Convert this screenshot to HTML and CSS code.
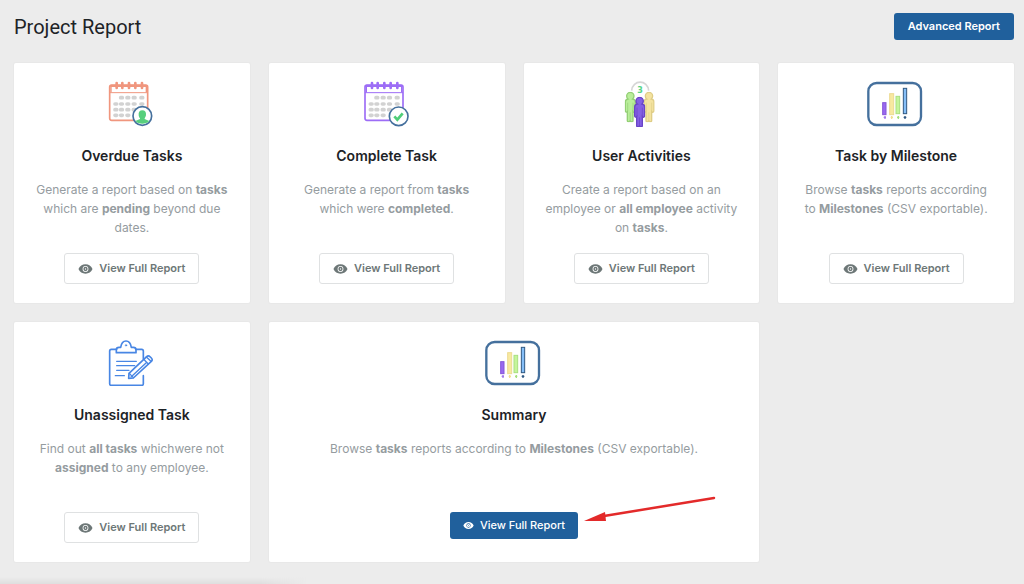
FILE: index.html
```html
<!DOCTYPE html>
<html lang="en">
<head>
<meta charset="utf-8">
<meta name="viewport" content="width=device-width, initial-scale=1">
<title>Project Report</title>
<link rel="stylesheet" href="styles.css">
</head>
<body>
<svg class="sprite" aria-hidden="true">
  <symbol id="eye" viewBox="0 0 16 12">
    <path fill="currentColor" fill-rule="evenodd" d="M8 1C4.600 1 1.800 3 .5 6c1.300 3 4.100 5 7.500 5s6.200-2 7.500-5C14.200 3 11.400 1 8 1Zm0 1.900a3.100 3.100 0 1 1 0 6.200 3.100 3.100 0 0 1 0-6.200Z"/>
    <path fill="currentColor" fill-rule="evenodd" d="M8 3.700a2.300 2.300 0 1 0 0 4.600 2.300 2.300 0 0 0 0-4.600Zm0 1.600a.7.7 0 1 1 0 1.400.7.7 0 0 1 0-1.400Z"/>
  </symbol>
  <symbol id="calendar" viewBox="0 27 192 138">
    <rect x="29" y="39" width="114" height="106" rx="6" fill="#fff" stroke="currentColor" stroke-width="5"/>
    <path d="M29 62H143M32 40H140" stroke="currentColor" stroke-width="3"/>
    <path d="M31 42H141" stroke="currentColor" stroke-width="6"/>
    <path d="M33 42V61M139 42V61" stroke="currentColor" stroke-width="4"/>
    <path d="M50 33V48M67 33V48M87 33V48M106 33V48M126 33V48" stroke="currentColor" stroke-width="8" stroke-linecap="round"/>
    <path d="M62 77h5M81 77h5M100 77h5M123 77h5M45 96h5M62 96h5M81 96h5M100 96h5M123 96h5M45 113h5M62 113h5M81 113h5M100 113h5M45 130h5M62 130h5M81 130h5" stroke="#d2d2d2" stroke-width="11" stroke-linecap="round"/>
  </symbol>
  <symbol id="person" viewBox="0 0 34 92">
    <path d="M17 2c6 0 11 5 11 11 0 4-2 7-4 9 5 1 8 4 8 9v26c0 5-5 6-7 3v28c0 3-7 3-8 0h-1c-1 3-8 3-8 0V60c-3 3-6 1-6-3V31c0-5 3-8 8-9-3-2-4-5-4-9 0-6 5-11 11-11Z" stroke-width="4"/>
    <path d="M9 33v26M25 33v26M16.500 62v25" fill="none" stroke-width="2"/>
  </symbol>
  <symbol id="chart" viewBox="3 27 210 138">
    <rect x="25" y="33" width="158" height="126" rx="25" fill="#fff" stroke="#45709d" stroke-width="7"/>
    <g stroke-width="3">
      <rect x="68" y="92" width="10" height="36" fill="#9868f0" stroke="#8556d8"/>
      <rect x="89" y="65" width="12" height="63" fill="#f8e9a0" stroke="#ecdb92"/>
      <rect x="108" y="73" width="11" height="52" fill="#c4f59b" stroke="#a9df80"/>
      <rect x="130" y="49" width="10" height="76" fill="#85bef7" stroke="#315982"/>
    </g>
    <g stroke-width="4">
      <path d="M71 136h7M75 132v9" stroke="#a27bea"/>
      <path d="M92 136h7M95 132v9" stroke="#f2df91"/>
      <path d="M111 136h7M115 132v9" stroke="#a5df7e"/>
      <path d="M131 136h8M135 132v9" stroke="#315982"/>
    </g>
  </symbol>
</svg>

<header class="page-header">
  <h1 class="page-title">Project Report</h1>
  <button class="button button-primary button-advanced" type="button">Advanced Report</button>
</header>

<main class="report-grid">
  <article class="card">
    <svg class="card-icon" aria-hidden="true" viewBox="0 27 192 138">
      <use class="coral" href="#calendar" x="0" y="27" width="192" height="138"/>
      <circle cx="127" cy="132" r="28" fill="#fff" stroke="#45709d" stroke-width="5"/>
      <path d="M127 115c8 0 12 6 11 13 0 5-3 8-4 11v2l14 6c-10 11-32 11-42 0l14-6v-2c-2-3-4-6-4-11-1-7 3-13 11-13Z" fill="#57cf7d"/>
    </svg>
    <h2 class="card-title">Overdue Tasks</h2>
    <p class="card-text">Generate a report based on <b>tasks</b> which are <b>pending</b> beyond due dates.</p>
    <div class="card-action"><a class="button button-outline" href="#overdue"><svg class="eye" aria-hidden="true"><use href="#eye"/></svg>View Full Report</a></div>
  </article>

  <article class="card">
    <svg class="card-icon" aria-hidden="true" viewBox="0 27 192 138">
      <use class="violet" href="#calendar" x="1" y="27" width="192" height="138"/>
      <circle cx="131" cy="133" r="28" fill="#fff" stroke="#45709d" stroke-width="5"/>
      <path d="m118 133 9 10 16-19" fill="none" stroke="#50ce79" stroke-width="8"/>
    </svg>
    <h2 class="card-title">Complete Task</h2>
    <p class="card-text">Generate a report from <b>tasks</b> which were <b>completed</b>.</p>
    <div class="card-action"><a class="button button-outline" href="#complete"><svg class="eye" aria-hidden="true"><use href="#eye"/></svg>View Full Report</a></div>
  </article>

  <article class="card">
    <svg class="card-icon" aria-hidden="true" viewBox="-4 27 192 138">
      <path d="M64 56c2-34 49-34 51 0" fill="none" stroke="#d6d6d6" stroke-width="5"/>
      <text class="icon-count" x="89" y="62">3</text>
      <use class="person-green" href="#person" x="43" y="59" width="34" height="92"/>
      <use class="person-yellow" href="#person" x="99" y="59" width="34" height="92"/>
      <use class="person-purple" href="#person" x="71" y="74" width="34" height="92"/>
    </svg>
    <h2 class="card-title">User Activities</h2>
    <p class="card-text">Create a report based on an employee or <b>all employee</b> activity on <b>tasks</b>.</p>
    <div class="card-action"><a class="button button-outline" href="#activities"><svg class="eye" aria-hidden="true"><use href="#eye"/></svg>View Full Report</a></div>
  </article>

  <article class="card">
    <svg class="card-icon card-icon-chart" aria-hidden="true"><use href="#chart"/></svg>
    <h2 class="card-title">Task by Milestone</h2>
    <p class="card-text">Browse <b>tasks</b> reports according to <b>Milestones</b> (CSV exportable).</p>
    <div class="card-action"><a class="button button-outline" href="#milestone"><svg class="eye" aria-hidden="true"><use href="#eye"/></svg>View Full Report</a></div>
  </article>

  <article class="card">
    <svg class="card-icon" aria-hidden="true" viewBox="0 24 192 138" fill="none" stroke="#4886e4" stroke-width="5" stroke-linecap="round" stroke-linejoin="round">
      <path d="M50 52H34q-5 0-5 5v98q0 5 5 5h91q5 0 5-5v-24M107 52h18q5 0 5 5v23"/>
      <path d="M49 62v-9q0-7 8-7h5q3-19 16-19t16 19h6q8 0 8 7v9Z"/>
      <circle cx="78" cy="40" r="2" stroke-width="3"/>
      <path d="M50 88h59M50 101h54M50 115h37M46 131h27" stroke-width="4"/>
      <g fill="#fff">
        <path d="m87 124 53-50q5-5 11 1l3 3q5 5 0 10l-54 50-14 1Z"/>
        <path d="m131 82 14 14M139 75l14 13M93 135l45-42M88 124l12 13" fill="none" stroke-width="4"/>
      </g>
    </svg>
    <h2 class="card-title">Unassigned Task</h2>
    <p class="card-text">Find out <b>all tasks</b> whichwere not <b>assigned</b> to any employee.</p>
    <div class="card-action"><a class="button button-outline" href="#unassigned"><svg class="eye" aria-hidden="true"><use href="#eye"/></svg>View Full Report</a></div>
  </article>

  <article class="card card-wide">
    <svg class="card-icon card-icon-chart" aria-hidden="true"><use href="#chart"/></svg>
    <h2 class="card-title">Summary</h2>
    <p class="card-text">Browse <b>tasks</b> reports according to <b>Milestones</b> (CSV exportable).</p>
    <div class="card-action">
      <a class="button button-primary button-summary" href="#summary"><svg class="eye eye-small" aria-hidden="true"><use href="#eye"/></svg>View Full Report
        <svg class="arrow" viewBox="0 0 132 28" aria-hidden="true"><path d="M20 20 130 2" stroke="#e32a2a" stroke-width="2.500" stroke-linecap="round"/><path d="m0 25 21-9 1 9Z" fill="#e32a2a"/></svg>
      </a>
    </div>
  </article>
</main>
<div class="bottom-shade"></div>
</body>
</html>
```
FILE: styles.css
```css
* { box-sizing: border-box; }

body {
  margin: 0;
  min-height: 100vh;
  padding: 13px 10px 23px 14px;
  background: #ececec;
  color: #1d2327;
  font-family: Inter, "Liberation Sans", sans-serif;
  position: relative;
}

.sprite { position: absolute; width: 0; height: 0; }

.page-header {
  display: flex;
  justify-content: space-between;
  align-items: flex-start;
  margin-bottom: 22px;
}

.page-title {
  margin: 0;
  font: 400 20px/28px Roboto, sans-serif;
}

.report-grid {
  display: grid;
  grid-template-columns: repeat(4, minmax(0, 1fr));
  grid-auto-rows: 1fr;
  gap: 19px;
}

.card {
  display: flex;
  flex-direction: column;
  align-items: center;
  padding: 18px 20px 19px;
  background: #fff;
  box-shadow: 0 0 0 1px #e8e8e8;
  border-radius: 2px;
  text-align: center;
}

.card-wide { grid-column: span 2; }

.card-icon { width: 64px; height: 46px; }
.card-icon-chart { width: 70px; }

.card-title {
  margin: 19px 0 14px;
  font-size: 14px;
  line-height: 20px;
  font-weight: 600;
}

.card-text {
  margin: 0 0 16px;
  color: #959ca0;
  font-size: 12px;
  line-height: 19px;
}

.card-text b { font-weight: 700; }

.card-action {
  display: flex;
  align-items: flex-start;
  height: 31px;
  margin-top: auto;
}

.button {
  display: inline-flex;
  align-items: center;
  justify-content: center;
  border-radius: 3px;
  font-family: inherit;
  font-size: 11px;
  line-height: 17px;
  text-decoration: none;
  white-space: nowrap;
}

.button-outline {
  gap: 6px;
  padding: 6px 13px;
  border: 1px solid #dfe1e2;
  background: #fff;
  color: #6d7777;
  font-weight: 600;
}

.button-primary {
  position: relative;
  padding: 5px 13px;
  border: 0;
  background: #20609c;
  color: #fff;
}

.button-advanced { font-weight: 600; padding: 5px 14px; }
.button-summary { gap: 6px; font-weight: 500; }

.eye { width: 15px; height: 12px; }
.eye-small { width: 11px; height: 9px; }

.arrow {
  position: absolute;
  left: calc(100% + 6px);
  bottom: 15px;
  width: 132px;
  height: 28px;
}

.coral { color: #f0967e; }
.violet { color: #9d6df6; }
.person-green { fill: #b9ee9a; stroke: #94cf76; }
.person-yellow { fill: #f4e3a0; stroke: #dfcd87; }
.person-purple { fill: #8460e4; stroke: #6944c6; }

.icon-count {
  fill: #57d486;
  font: 700 24px "DejaVu Sans", sans-serif;
  text-anchor: middle;
}

.bottom-shade {
  position: absolute;
  left: 0;
  bottom: 0;
  width: 30%;
  height: 8px;
  background: linear-gradient(to top, #dcdcdc, #ececec);
  -webkit-mask-image: linear-gradient(to right, #000 85%, transparent);
  mask-image: linear-gradient(to right, #000 85%, transparent);
}
```
